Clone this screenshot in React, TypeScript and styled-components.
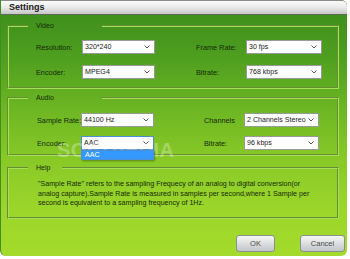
import React from 'react';
import styled, { createGlobalStyle } from 'styled-components';

type SelectProps = {
  value: string;
  open?: boolean;
};

const Select: React.FC<SelectProps> = ({ value, open }) => (
  <SelectBox $open={open}>
    <SelectValue>{value}</SelectValue>
    <svg width="6" height="4" viewBox="0 0 6 4">
      <path d="M0.5 0.5 L3 3 L5.5 0.5" fill="none" stroke="#555" strokeWidth="1" />
    </svg>
    {open && (
      <DropList>
        <DropItem>{value}</DropItem>
      </DropList>
    )}
  </SelectBox>
);

const App: React.FC = () => {
  return (
    <>
      <GlobalStyle />
      <Window>
        <TitleBar>Settings</TitleBar>
        <Body>
          <Group $top={6}>
            <Legend $width={74}>Video</Legend>
            <Grid $cols="46px 73px 41px 50px 76px" $left={27} $pt={9} $pb={8} $gap={11}>
              <Label>Resolution:</Label>
              <Select value="320*240" />
              <span />
              <Label>Frame Rate:</Label>
              <Select value="30 fps" />
              <Label>Encoder:</Label>
              <Select value="MPEG4" />
              <span />
              <Label>Bitrate:</Label>
              <Select value="768 kbps" />
            </Grid>
          </Group>

          <Group $top={4}>
            <Legend $width={74}>Audio</Legend>
            <Grid $cols="44px 73px 50px 40px 75px" $left={28} $pt={10} $pb={4} $gap={9}>
              <Label>Sample Rate:</Label>
              <Select value="44100 Hz" />
              <span />
              <Label>Channels</Label>
              <Select value="2 Channels Stereo" />
              <Label>Encoder:</Label>
              <Select value="AAC" open />
              <span />
              <Label>Bitrate:</Label>
              <Select value="96 kbps" />
            </Grid>
          </Group>

          <Group $top={7}>
            <Legend $width={34}>Help</Legend>
            <HelpText>
              "Sample Rate" refers to the sampling Frequecy of an analog to digital conversion(or
              <br />
              analog capture).Sample Rate is measured in samples per second,where 1 Sample per
              <br />
              second is equivalent to a sampling frequency of 1Hz.
            </HelpText>
          </Group>

          <Buttons>
            <Button $width={39}>OK</Button>
            <Button $width={45}>Cancel</Button>
          </Buttons>
        </Body>
        <Watermark>SOFTPEDIA</Watermark>
      </Window>
    </>
  );
};

const GlobalStyle = createGlobalStyle`
  html, body {
    margin: 0;
    padding: 0;
    background: #ffffff;
  }

  body {
    font-family: "Liberation Sans", Arial, sans-serif;
  }
`;

const Window = styled.div`
  position: relative;
  width: 347px;
  height: 256px;
  box-sizing: border-box;
  border-left: 1px solid #3f8f1a;
  border-radius: 0 6px 6px 6px;
  overflow: hidden;
  background: linear-gradient(180deg, #3a8a1c 0%, #4e9e1f 22%, #6cb623 42%, #88c927 62%, #9cd62a 82%, #a4db2c 100%);
`;

const TitleBar = styled.div`
  box-sizing: border-box;
  height: 15px;
  border-top: 1px solid #8c8c8c;
  border-bottom: 1px solid #5f6a5a;
  border-top-right-radius: 5px;
  padding-left: 8px;
  background: linear-gradient(180deg, #fafafa 0%, #ececec 45%, #c6c6c6 100%);
  font-size: 9px;
  font-weight: bold;
  line-height: 13px;
  color: #1a1a1a;
`;

const Body = styled.div`
  display: flex;
  flex-direction: column;
`;

const Group = styled.fieldset<{ $top: number }>`
  margin: ${(p) => p.$top}px 8px 0 6px;
  padding: 0;
  min-width: 0;
  border: 2px groove #a6e05a;
`;

const Legend = styled.legend<{ $width: number }>`
  box-sizing: border-box;
  width: ${(p) => p.$width}px;
  margin-left: 19px;
  padding: 0 0 0 8px;
  height: 10px;
  font-size: 7px;
  line-height: 10px;
  color: #142a08;
`;

const Grid = styled.div<{ $cols: string; $left: number; $pt: number; $pb: number; $gap: number }>`
  display: grid;
  grid-template-columns: ${(p) => p.$cols};
  row-gap: ${(p) => p.$gap}px;
  align-items: center;
  padding: ${(p) => p.$pt}px 0 ${(p) => p.$pb}px ${(p) => p.$left}px;
`;

const Label = styled.span`
  font-size: 7.3px;
  color: #142a08;
  white-space: nowrap;
`;

const SelectBox = styled.div<{ $open?: boolean }>`
  position: relative;
  display: flex;
  align-items: center;
  justify-content: space-between;
  gap: 2px;
  height: 14px;
  box-sizing: border-box;
  padding: 0 4px 0 2px;
  background: #ffffff;
  border: 1px solid ${(p) => (p.$open ? '#4f8fd8' : '#9a9a9a')};

  svg {
    flex-shrink: 0;
  }
`;

const SelectValue = styled.span`
  font-size: 7.1px;
  color: #1a1a1a;
  white-space: nowrap;
`;

const DropList = styled.div`
  position: absolute;
  left: -1px;
  right: -1px;
  top: 13px;
  height: 10px;
  box-sizing: border-box;
  border: 1px solid #4f8fd8;
  background: #3399ff;
  box-shadow: 1px 1px 2px rgba(0, 0, 0, 0.35);
  z-index: 2;
`;

const DropItem = styled.div`
  padding-left: 3px;
  font-size: 7.1px;
  line-height: 8px;
  color: #ffffff;
`;

const HelpText = styled.p`
  margin: 0;
  padding: 7px 0 8px 29px;
  font-size: 7.1px;
  line-height: 9.5px;
  color: #142a08;
  white-space: nowrap;
`;

const Buttons = styled.div`
  display: flex;
  justify-content: flex-end;
  gap: 25px;
  margin-top: 16px;
  padding-right: 2px;
`;

const Button = styled.button<{ $width: number }>`
  width: ${(p) => p.$width}px;
  height: 17px;
  padding: 0;
  border: 1px solid #8a8f94;
  border-radius: 3px;
  background: linear-gradient(180deg, #f6f6f6 0%, #dcdee0 50%, #c2c6ca 100%);
  font-family: "Liberation Sans", Arial, sans-serif;
  font-size: 7.5px;
  color: #4a4a4a;
`;

const Watermark = styled.div`
  position: absolute;
  left: 56px;
  top: 139px;
  font-size: 20px;
  font-weight: bold;
  letter-spacing: 0.3px;
  color: rgba(255, 255, 255, 0.3);
  pointer-events: none;
`;

export default App;
